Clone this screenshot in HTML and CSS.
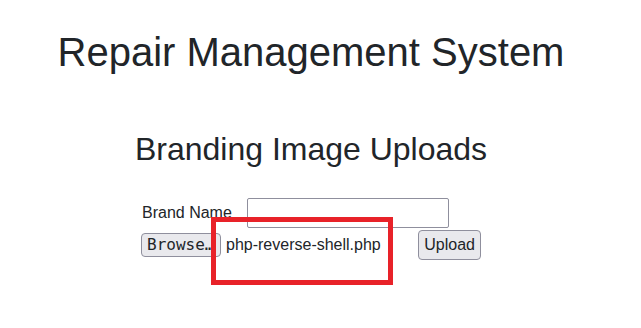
FILE: index.html
```html
<!DOCTYPE html>
<html>
<head>
<meta charset="utf-8">
<link rel="stylesheet" href="styles.css">
</head>
<body>
<div class="page">
  <h1 class="title">Repair Management System</h1>
  <h2 class="subtitle">Branding Image Uploads</h2>
  <form class="upload-form">
    <div class="row row-name">
      <span class="label">Brand Name</span>
      <span class="text-input"></span>
    </div>
    <div class="row row-file">
      <span class="file-pick">
        <span class="browse">Browse…</span>
        <span class="file-name">php-reverse-shell.php</span>
      </span>
      <span class="upload-btn">Upload</span>
    </div>
  </form>
</div>
<div class="highlight"></div>
</body>
</html>
```
FILE: styles.css
```css
html, body {
  margin: 0;
  padding: 0;
  background: #ffffff;
}
body {
  font-family: "Liberation Sans", Arial, sans-serif;
  color: #212529;
  width: 622px;
  height: 328px;
  overflow: hidden;
  position: relative;
}
.page {
  display: flex;
  flex-direction: column;
  align-items: center;
}
.title {
  margin: 28px 0 0 0;
  font-size: 40px;
  font-weight: 400;
  line-height: 48px;
}
.subtitle {
  margin: 54px 0 0 0;
  font-size: 32px;
  font-weight: 400;
  line-height: 38px;
}
.upload-form {
  margin-top: 30px;
  width: 340px;
  display: flex;
  flex-direction: column;
}
.row {
  display: flex;
  align-items: center;
}
.row-name {
  margin-left: 1px;
}
.label {
  font-size: 16px;
  width: 105px;
}
.text-input {
  width: 200px;
  height: 28px;
  border: 1px solid #8f8f9d;
  border-radius: 2px;
  box-sizing: content-box;
}
.row-file {
  margin-top: 2px;
  justify-content: space-between;
}
.file-pick {
  display: flex;
  align-items: center;
}
.browse {
  font-family: "DejaVu Sans Mono", "Liberation Mono", monospace;
  font-size: 16px;
  background: #e9e9ed;
  border: 1px solid #8f8f9d;
  border-radius: 4px;
  height: 22px;
  line-height: 22px;
  padding: 0 5px;
  width: 68px;
  box-sizing: content-box;
  overflow: hidden;
  white-space: nowrap;
}
.file-name {
  font-size: 16px;
  margin-left: 5px;
}
.upload-btn {
  font-size: 16px;
  background: #e9e9ed;
  border: 1px solid #8f8f9d;
  border-radius: 4px;
  height: 28px;
  line-height: 28px;
  padding: 0 5px;
}
.highlight {
  position: absolute;
  left: 211px;
  top: 217px;
  width: 172px;
  height: 58px;
  border: 5px solid #e82229;
}
```
